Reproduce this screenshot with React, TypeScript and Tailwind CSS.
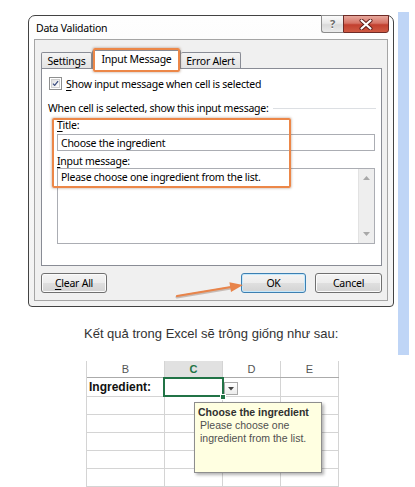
import React from "react";

function Checkbox() {
  return (
    <div className="w-[13px] h-[13px] border border-[#8e8f8f] bg-white p-px shrink-0">
      <div className="w-full h-full border border-[#d0d0d0] bg-[linear-gradient(135deg,#e0e0e0,#ffffff)] flex items-center justify-center">
        <svg width="9" height="9" viewBox="0 0 9 9">
          <path d="M1.2 4.6 L3.4 7 L7.8 1.4" fill="none" stroke="#3d4f80" strokeWidth="1.6" strokeLinejoin="round" />
        </svg>
      </div>
    </div>
  );
}

function WinButton({ label, accent, isDefault, w }: { label: string; accent?: number; isDefault?: boolean; w: string }) {
  const chars = label.split("");
  return (
    <div
      className={
        "h-[20px] rounded-[3px] border flex items-center justify-center text-[10.5px] leading-[14px] text-black " +
        w +
        (isDefault
          ? " border-[#3c7fb1] shadow-[inset_0_0_0_1px_#c4e8fc] bg-[linear-gradient(#f4f4f4,#ececec_50%,#dfdfdf_51%,#d3d3d3)]"
          : " border-[#707070] shadow-[inset_0_0_0_1px_#fbfbfb] bg-[linear-gradient(#f4f4f4,#ececec_50%,#dfdfdf_51%,#d3d3d3)]")
      }
    >
      <span>
        {chars.map((c, i) =>
          i === accent ? (
            <span key={i} className="underline underline-offset-2">
              {c}
            </span>
          ) : (
            <span key={i}>{c}</span>
          )
        )}
      </span>
    </div>
  );
}

function Dialog() {
  return (
    <div className="ml-[28px] mt-[15px] w-[366px] h-[292px] border border-[#434343] rounded-t-[7px] rounded-b-[4px] bg-[linear-gradient(#fefefe,#f2f2f2)] px-[5px] pb-[5px] flex flex-col tracking-[-0.25px]">
      {/* title bar */}
      <div className="h-[23px] flex items-start shrink-0">
        <span className="ml-[2px] mt-[5px] text-[10.5px] leading-[14px] text-black whitespace-nowrap">Data Validation</span>
        <div className="ml-auto -mt-px mr-[-1px] flex">
          <div className="w-[22px] h-[18px] border border-[#8d8d8d] border-r-0 rounded-bl-[3px] bg-[linear-gradient(#fbfbfb,#e9e9e9_45%,#d9d9d9_55%,#ebebeb)] flex items-center justify-center">
            <span className="text-[11px] leading-[12px] font-bold text-[#6a6a6a] [text-shadow:0_1px_0_#fff]">?</span>
          </div>
          <div className="w-[46px] h-[18px] border border-[#6e2b26] rounded-br-[3px] bg-[linear-gradient(#e7a89d,#d67365_45%,#c2402f_55%,#cf5a43)] flex items-center justify-center">
            <svg width="14" height="11" viewBox="0 0 14 11">
              <path d="M2.5 1.5 L11.5 9.5 M11.5 1.5 L2.5 9.5" stroke="#5b1d18" strokeWidth="4" strokeLinecap="round" />
              <path d="M2.5 1.5 L11.5 9.5 M11.5 1.5 L2.5 9.5" stroke="#ffffff" strokeWidth="2.2" strokeLinecap="round" />
            </svg>
          </div>
        </div>
      </div>

      {/* client area */}
      <div className="h-[262px] border border-[#a5a5a5] bg-[#f0f0f0] flex flex-col">
        {/* tabs */}
        <div className="mt-[10px] ml-[6px] h-[18px] flex items-end">
          <div className="w-[51px] h-[16px] border border-b-0 border-[#898c95] rounded-t-[2px] bg-[linear-gradient(#f4f4f4,#e3e3e3)] flex items-center justify-center text-[10.5px] leading-[14px] text-black">
            Settings
          </div>
          <div className="relative z-10 w-[89px] h-[19px] mb-[-1px] border border-b-0 border-[#898c95] rounded-t-[2px] bg-white flex items-start justify-center pt-[1px] text-[10.5px] leading-[14px] text-black">
            Input Message
            <div className="absolute left-[0px] right-[0px] top-[-3px] h-[24px] border-2 border-[#ec8748] rounded-[2px] shadow-[0_0_2px_1px_rgba(120,70,40,0.25)]" />
          </div>
          <div className="w-[60px] h-[16px] border border-b-0 border-l-0 border-[#898c95] rounded-t-[2px] bg-[linear-gradient(#f4f4f4,#e3e3e3)] flex items-center justify-center text-[10.5px] leading-[14px] text-black">
            Error Alert
          </div>
        </div>

        {/* panel */}
        <div className="relative ml-[6px] w-[341px] h-[198px] border border-[#898c95] bg-white flex flex-col text-[10.5px] leading-[14px] text-black">
          <div className="mt-[8px] ml-[7px] h-[13px] flex items-center">
            <Checkbox />
            <span className="ml-[4px] whitespace-nowrap">
              <span className="underline underline-offset-2">S</span>how input message when cell is selected
            </span>
          </div>
          <div className="mt-[11px] ml-[6px] mr-[5px] h-[14px] flex items-center">
            <span className="whitespace-nowrap">When cell is selected, show this input message:</span>
            <div className="ml-[4px] flex-1 h-px bg-[#dcdfe3]" />
          </div>
          <div className="mt-[3px] ml-[15px] h-[14px]">
            <span className="underline underline-offset-2">T</span>itle:
          </div>
          <div className="mt-[2px] ml-[15px] w-[318px] h-[17px] border border-[#abadb3] bg-white pl-[3px] flex items-center whitespace-nowrap">
            Choose the ingredient
          </div>
          <div className="mt-[3px] ml-[15px] h-[14px]">
            <span className="underline underline-offset-2">I</span>nput message:
          </div>
          <div className="ml-[15px] w-[318px] h-[76px] border border-[#abadb3] bg-white flex">
            <div className="flex-1 pl-[3px] pt-[1px] whitespace-nowrap">Please choose one ingredient from the list.</div>
            <div className="w-[16px] h-full bg-[#eeeeee] border-l border-[#e2e2e2] flex flex-col items-center justify-between py-[7px]">
              <svg width="7" height="4" viewBox="0 0 7 4">
                <path d="M0 4 L3.5 0 L7 4 Z" fill="#a8a8a8" />
              </svg>
              <svg width="7" height="4" viewBox="0 0 7 4">
                <path d="M0 0 L3.5 4 L7 0 Z" fill="#a8a8a8" />
              </svg>
            </div>
          </div>
          {/* orange highlight */}
          <div className="absolute left-[10px] top-[49px] w-[239px] h-[70px] border-2 border-[#ec8748] rounded-[2px] shadow-[0_0_2px_1px_rgba(120,70,40,0.25)]" />
        </div>

        {/* buttons */}
        <div className="mt-[7px] ml-[6px] w-[341px] flex">
          <WinButton label="Clear All" accent={0} w="w-[66px]" />
          <div className="ml-auto">
            <WinButton label="OK" isDefault w="w-[65px]" />
          </div>
          <div className="ml-[9px]">
            <WinButton label="Cancel" w="w-[67px]" />
          </div>
        </div>
      </div>
    </div>
  );
}

function Sheet() {
  const hdr = "h-full border-r border-[#d4d4d4] flex items-center justify-center text-[11px] leading-[12px]";
  const cell = "h-full border-r border-[#d4d4d4]";
  const rows = [0, 1, 2, 3, 4];
  return (
    <div className="relative mt-[19px] ml-[86px] w-[253px] border-l border-[#d4d4d4] font-['Liberation_Sans',Arial,sans-serif]">
      <div className="h-[17px] flex border-b border-[#ababab]">
        <div className={hdr + " w-[78px] text-[#555]"}>B</div>
        <div className={hdr + " w-[58px] bg-[#e1e1e1] text-[#217346] font-bold"}>C</div>
        <div className={hdr + " w-[58px] text-[#555]"}>D</div>
        <div className={hdr + " w-[58px] text-[#555]"}>E</div>
      </div>
      <div className="h-[19px] flex border-b border-[#d4d4d4]">
        <div className={cell + " w-[78px] flex items-center pl-[2px] text-[12px] font-bold text-[#111]"}>Ingredient:</div>
        <div className={cell + " w-[58px] relative"}>
          <div className="absolute left-[-2px] right-[-2px] top-[-1px] bottom-[-1px] border-2 border-[#217346]" />
          <div className="absolute right-[-4px] bottom-[-4px] w-[6px] h-[6px] bg-[#217346] border border-white" />
        </div>
        <div className={cell + " w-[58px] pl-[1px] pt-[4px]"}>
          <div className="w-[14px] h-[13px] border border-[#a9a9a9] bg-[linear-gradient(#ffffff,#ececec)] flex items-center justify-center">
            <svg width="6" height="4" viewBox="0 0 6 4">
              <path d="M0 0 L3 3.5 L6 0 Z" fill="#444" />
            </svg>
          </div>
        </div>
        <div className={cell + " w-[58px]"} />
      </div>
      {rows.map((r) => (
        <div key={r} className="h-[18px] flex border-b border-[#d4d4d4]">
          <div className={cell + " w-[78px]"} />
          <div className={cell + " w-[58px]"} />
          <div className={cell + " w-[58px]"} />
          <div className={cell + " w-[58px]"} />
        </div>
      ))}
      {/* tooltip */}
      <div className="absolute left-[107px] top-[41px] w-[128px] h-[71px] border border-[#8e8e8e] bg-[#ffffe1] shadow-[2px_2px_3px_rgba(0,0,0,0.3)] pt-[3px] text-[10.5px] leading-[13px] whitespace-nowrap">
        <div className="pl-[3px] font-bold text-[#303030]">Choose the ingredient</div>
        <div className="pl-[5px] text-[#505050]">Please choose one</div>
        <div className="pl-[5px] text-[#505050]">ingredient from the list.</div>
      </div>
    </div>
  );
}

export default function App() {
  return (
    <div className="relative w-[415px] h-[487px] overflow-hidden bg-white font-['Noto_Sans',sans-serif]">
      <div className="flex">
        <div className="w-[398px] shrink-0">
          <Dialog />
          <p className="mt-[19px] ml-[84px] text-[13px] leading-[16px] text-[#333] font-['Liberation_Sans',Arial,sans-serif] whitespace-nowrap">
            Kết quả trong Excel sẽ trông giống như sau:
          </p>
          <Sheet />
        </div>
        <div className="mt-[12px] w-[11px] h-[343px] bg-[#bfd5f6]" />
      </div>
      <svg className="absolute left-0 top-0 pointer-events-none" width="415" height="487" viewBox="0 0 415 487">
        <path d="M177 297 L231 288" stroke="#7a5a48" strokeOpacity="0.35" strokeWidth="3" strokeLinecap="round" />
        <path d="M177 296 L231 287" stroke="#e8844a" strokeWidth="2.2" strokeLinecap="round" />
        <path d="M243 285 L229.4 282.2 L231 292 Z" fill="#e8844a" />
      </svg>
    </div>
  );
}
